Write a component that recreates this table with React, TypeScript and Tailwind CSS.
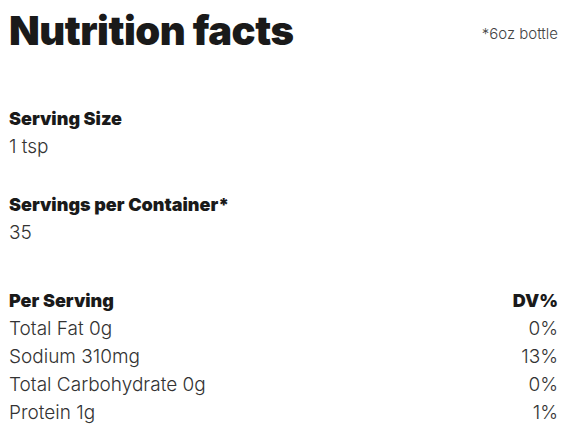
const rows = [
  { name: "Total Fat 0g", dv: "0%" },
  { name: "Sodium 310mg", dv: "13%" },
  { name: "Total Carbohydrate 0g", dv: "0%" },
  { name: "Protein 1g", dv: "1%" },
];

export default function App() {
  return (
    <div className="w-[582px] h-[434px] bg-white pl-[9px] pr-[24px] text-[#333] font-['Inter',sans-serif] font-light overflow-hidden">
      <div className="flex items-start justify-between pt-[11px]">
        <h1 className="font-black text-[40px] leading-[40px] tracking-[-0.5px] text-[#1a1a1a]">
          Nutrition facts
        </h1>
        <span className="text-[15px] leading-[18px] mt-[14px] text-[#444]">*6oz bottle</span>
      </div>

      <div className="mt-[54px] text-[19px] leading-[28px]">
        <div className="font-black text-[18px] text-[#1a1a1a]">Serving Size</div>
        <div>1 tsp</div>
      </div>

      <div className="mt-[30px] text-[19px] leading-[28px]">
        <div className="font-black text-[18px] text-[#1a1a1a]">Servings per Container*</div>
        <div>35</div>
      </div>

      <div className="mt-[40px] text-[19px] leading-[28px]">
        <div className="flex justify-between font-black text-[18px] text-[#1a1a1a]">
          <span>Per Serving</span>
          <span>DV%</span>
        </div>
        {rows.map((r) => (
          <div key={r.name} className="flex justify-between">
            <span>{r.name}</span>
            <span>{r.dv}</span>
          </div>
        ))}
      </div>
    </div>
  );
}
